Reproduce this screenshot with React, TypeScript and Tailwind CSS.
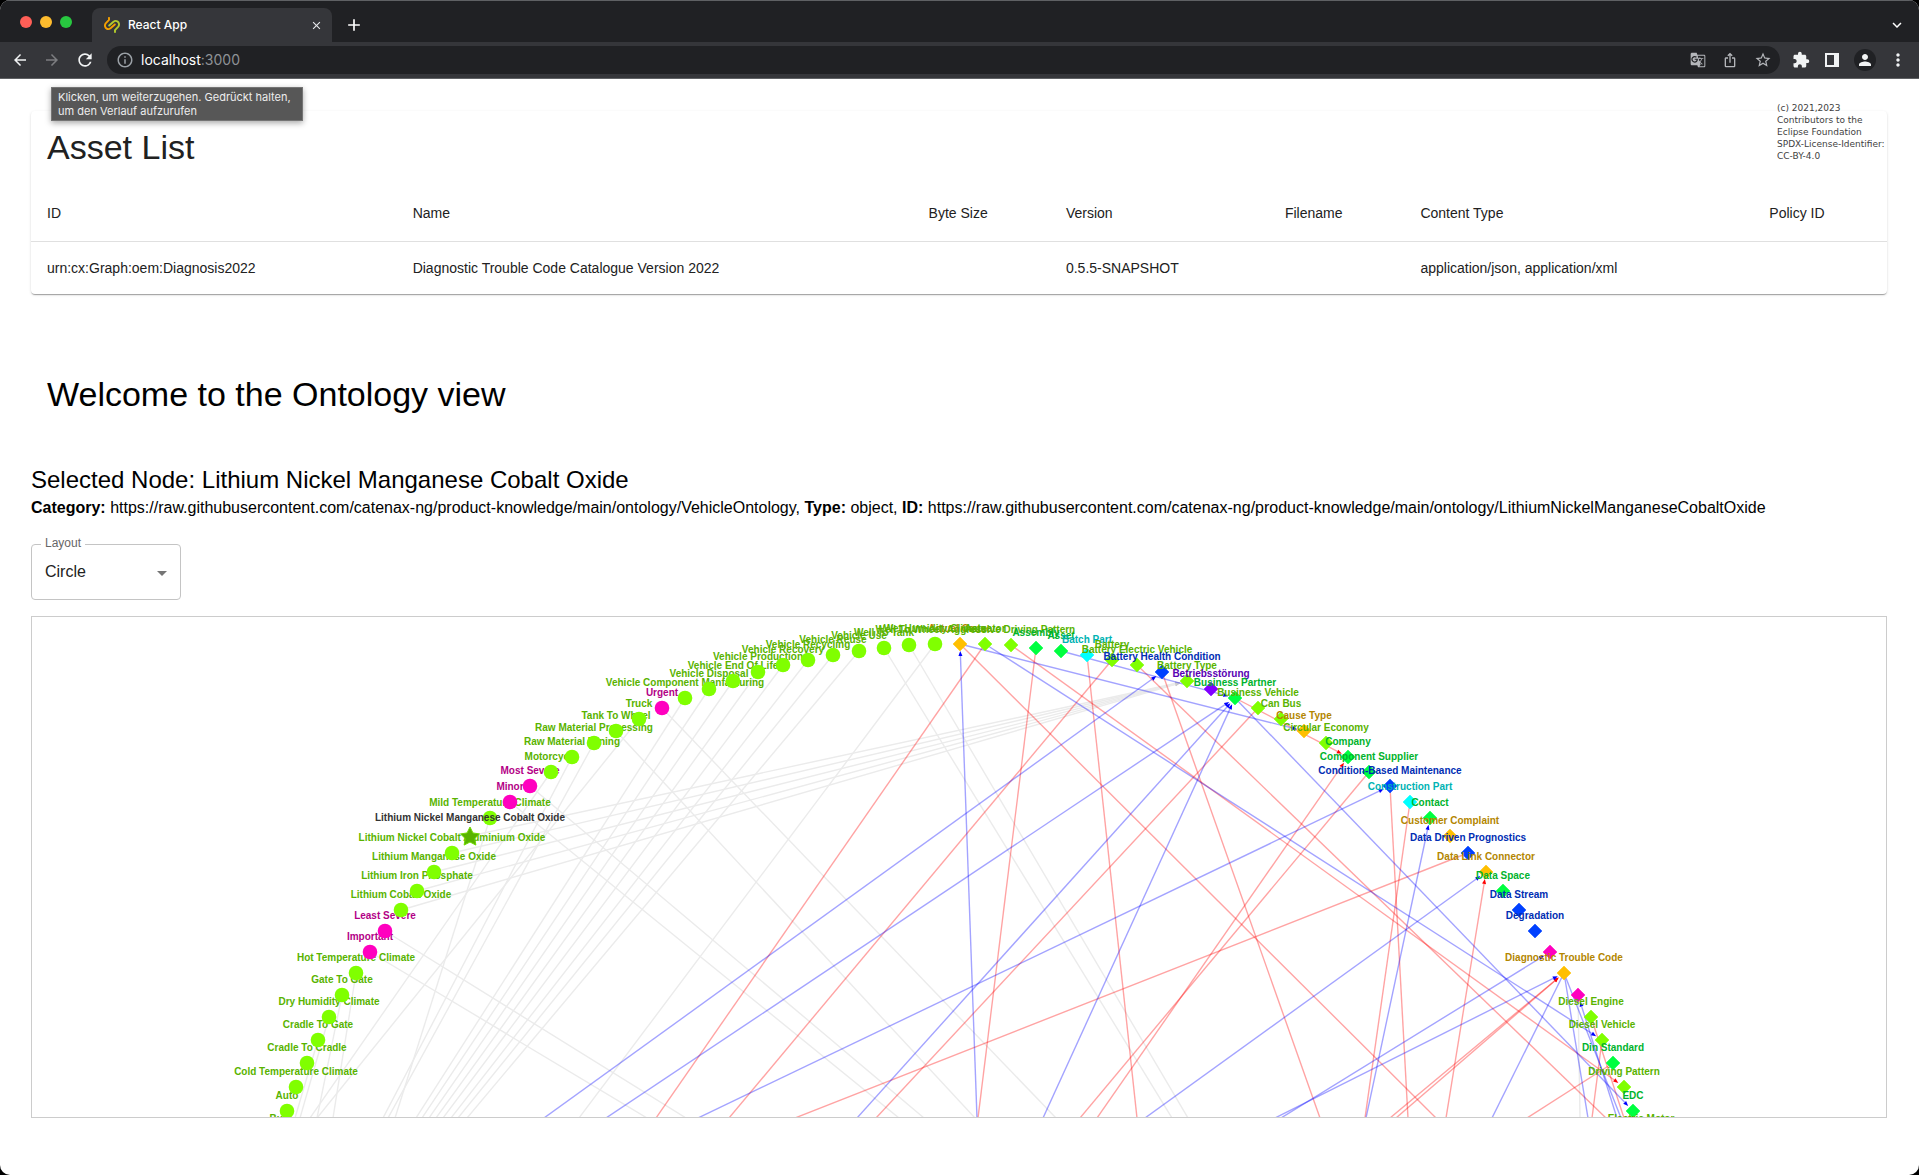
import React from "react";
import {
  MdAdd,
  MdArrowBack,
  MdArrowDropDown,
  MdArrowForward,
  MdClose,
  MdExtension,
  MdGTranslate,
  MdInfoOutline,
  MdIosShare,
  MdKeyboardArrowDown,
  MdMoreVert,
  MdPerson,
  MdRefresh,
  MdStarBorder,
} from "react-icons/md";

type Tone = "lime" | "green" | "blue" | "cyan" | "orange" | "purple" | "magenta";

const fills: Record<Tone, string> = {
  lime: "#80ff00",
  green: "#00ff40",
  blue: "#0040ff",
  cyan: "#00ffff",
  orange: "#ffbf00",
  purple: "#8000ff",
  magenta: "#ff00bf",
};

const inks: Record<Tone, string> = {
  lime: "#59b300",
  green: "#00b32d",
  blue: "#002db3",
  cyan: "#00b3b3",
  orange: "#b38600",
  purple: "#5900b3",
  magenta: "#b30086",
};

/* Offsets of each ring slot from the top of the circle; both halves share them. */
const CX = 960;
const ring: [number, number][] = [
  [0, 644], [25, 644], [51, 645], [76, 648], [101, 651], [127, 655],
  [152, 660], [177, 665], [202, 672], [227, 681], [251, 689], [275, 698],
  [298, 708], [321, 719], [344, 731], [366, 743], [388, 757], [409, 772],
  [430, 786], [450, 802], [470, 818], [490, 836], [508, 853], [526, 872],
  [543, 891], [559, 910], [575, 931], [590, 952], [604, 973], [618, 995],
  [631, 1017], [642, 1040], [653, 1063], [664, 1087], [673, 1111], [681, 1134],
];

const rightNodes: [string, Tone][] = [
  ["Actual Cause", "orange"],
  ["Actuator", "lime"],
  ["Aggressive Driving Pattern", "lime"],
  ["Assembly", "green"],
  ["Asset", "green"],
  ["Batch Part", "cyan"],
  ["Battery", "lime"],
  ["Battery Electric Vehicle", "lime"],
  ["Battery Health Condition", "blue"],
  ["Battery Type", "lime"],
  ["Betriebsstörung", "purple"],
  ["Business Partner", "green"],
  ["Business Vehicle", "lime"],
  ["Can Bus", "lime"],
  ["Cause Type", "orange"],
  ["Circular Economy", "lime"],
  ["Company", "green"],
  ["Component Supplier", "green"],
  ["Condition-Based Maintenance", "blue"],
  ["Construction Part", "cyan"],
  ["Contact", "green"],
  ["Customer Complaint", "orange"],
  ["Data Driven Prognostics", "blue"],
  ["Data Link Connector", "orange"],
  ["Data Space", "green"],
  ["Data Stream", "blue"],
  ["Degradation", "blue"],
  ["", "magenta"],
  ["Diagnostic Trouble Code", "orange"],
  ["", "magenta"],
  ["Diesel Engine", "lime"],
  ["Diesel Vehicle", "lime"],
  ["Din Standard", "green"],
  ["Driving Pattern", "lime"],
  ["EDC", "green"],
  ["Electric Motor", "lime"],
];

/* Left half, from the slot beside the top node down to the lower edge. */
const leftNodes: [string, Tone][] = [
  ["Wet Humidity Climate", "lime"],
  ["Well To Wheel", "lime"],
  ["Well To Tank", "lime"],
  ["Vehicle Use", "lime"],
  ["Vehicle Reuse", "lime"],
  ["Vehicle Recycling", "lime"],
  ["Vehicle Recovery", "lime"],
  ["Vehicle Production", "lime"],
  ["Vehicle End Of Life", "lime"],
  ["Vehicle Disposal", "lime"],
  ["Vehicle Component Manfacturing", "lime"],
  ["Urgent", "magenta"],
  ["Truck", "lime"],
  ["Tank To Wheel", "lime"],
  ["Raw Material Processing", "lime"],
  ["Raw Material Mining", "lime"],
  ["Motorcycle", "lime"],
  ["Most Severe", "magenta"],
  ["Minor", "magenta"],
  ["Mild Temperature Climate", "lime"],
  ["Lithium Nickel Manganese Cobalt Oxide", "lime"],
  ["Lithium Nickel Cobalt Aluminium Oxide", "lime"],
  ["Lithium Manganese Oxide", "lime"],
  ["Lithium Iron Phosphate", "lime"],
  ["Lithium Cobalt Oxide", "lime"],
  ["Least Severe", "magenta"],
  ["Important", "magenta"],
  ["Hot Temperature Climate", "lime"],
  ["Gate To Gate", "lime"],
  ["Dry Humidity Climate", "lime"],
  ["Cradle To Gate", "lime"],
  ["Cradle To Cradle", "lime"],
  ["Cold Temperature Climate", "lime"],
  ["Auto", "lime"],
  ["Bus", "lime"],
];

const SELECTED = 21;
const EDGE_Y = 1118;

const R = (i: number): [number, number] => [CX + ring[i][0], ring[i][1]];
const L = (i: number): [number, number] => [CX - ring[i][0], ring[i][1]];
const B = (x: number): [number, number] => [x, EDGE_Y];

type Edge = [[number, number], [number, number], boolean?];

const grayEdges: Edge[] = [
  [L(21), R(9), true], [L(22), R(9), true], [L(23), R(9), true], [L(24), R(9), true], [L(25), R(9), true],
  [L(1), B(579)], [L(2), B(1188)], [L(3), B(1172)],
  [L(4), B(467)], [L(5), B(458)], [L(6), B(451)], [L(7), B(443)], [L(8), B(436)],
  [L(9), B(429)], [L(10), B(422)], [L(11), B(416)], [L(12), B(1056)], [L(13), B(317)],
  [L(14), B(975)], [L(15), B(388)], [L(16), B(383)], [L(17), B(310)], [L(18), B(924)],
  [L(19), B(899)], [L(20), B(395)], [L(26), B(686)], [L(27), B(647)],
  [L(28), B(333)], [L(29), B(317)], [L(30), B(300)], [L(31), B(295)],
  [B(1580), R(29)],
];

const redEdges: Edge[] = [
  [R(1), B(656)], [R(6), B(729)], [R(3), B(978)], [R(5), B(1137)], [R(0), B(1436)],
  [R(2), R(33), true], [R(7), B(1606)], [R(8), B(1320)], [R(11), R(16), true],
  [R(12), B(876)], [B(1097), R(16), true], [R(17), B(1080)], [R(18), B(1408)],
  [R(19), B(1365)], [R(22), B(795)], [B(1446), R(23), true],
  [B(1390), R(28), true], [B(1396), R(28), true],
  [R(31), B(1592)], [R(30), B(1624)], [R(32), B(1527)],
];

const blueEdges: Edge[] = [
  [R(0), R(14), true], [R(4), R(11), true], [R(1), R(31), true], [R(11), R(34), true],
  [B(544), R(8), true], [B(606), R(11), true], [B(857), R(11), true], [B(1043), R(11), true],
  [B(698), R(18), true], [B(977), R(0), true], [B(1366), R(20), true], [B(1145), R(23), true],
  [B(1281), R(27), true], [B(1275), R(28), true], [R(28), B(1492)], [R(28), B(1588)],
  [R(28), B(1621)], [B(1617), R(29), true],
];

function EdgeGroup({ edges, color, line }: { edges: Edge[]; color: string; line: string }) {
  return (
    <g>
      {edges.map(([[x1, y1], [x2, y2], arrow], i) => {
        const length = Math.hypot(x2 - x1, y2 - y1);
        const ux = (x2 - x1) / length;
        const uy = (y2 - y1) / length;
        const tx = x2 - ux * 7;
        const ty = y2 - uy * 7;
        const bx = tx - ux * 5;
        const by = ty - uy * 5;
        const head = `${tx},${ty} ${bx - uy * 2},${by + ux * 2} ${bx + uy * 2},${by - ux * 2}`;
        return (
          <g key={i}>
            <line x1={x1} y1={y1} x2={arrow ? bx : x2} y2={arrow ? by : y2} stroke={line} strokeWidth="1.4" />
            {arrow && <polygon points={head} fill={color} />}
          </g>
        );
      })}
    </g>
  );
}

function NodeLabel({ x, y, text, color }: { x: number; y: number; text: string; color: string }) {
  return (
    <text x={x} y={y} textAnchor="middle" fontSize="10" fontWeight="700" fill={color}>
      {text}
    </text>
  );
}

function starPoints(x: number, y: number) {
  return Array.from({ length: 10 }, (_, i) => {
    const radius = i % 2 === 0 ? 10 : 5;
    const angle = (Math.PI / 5) * i - Math.PI / 2;
    return `${x + radius * Math.cos(angle)},${y + radius * Math.sin(angle)}`;
  }).join(" ");
}

function OntologyGraph() {
  const [sx, sy] = L(SELECTED);
  return (
    <svg
      viewBox="32 617 1854 500"
      className="block w-full font-['Liberation_Sans',Arial,sans-serif]"
      role="img"
      aria-label="Ontology graph in circle layout"
    >
      <EdgeGroup edges={grayEdges} color="#cccccc" line="#ebebeb" />
      <EdgeGroup edges={redEdges} color="#ff0000" line="rgba(255,0,0,0.36)" />
      <EdgeGroup edges={blueEdges} color="#0000ff" line="rgba(0,0,255,0.36)" />
      {rightNodes.map(([text, tone], i) => {
        const [x, y] = R(i);
        return (
          <g key={i}>
            <polygon
              points={`${x},${y - 7} ${x + 7},${y} ${x},${y + 7} ${x - 7},${y}`}
              fill={fills[tone]}
              stroke={fills[tone]}
              strokeWidth="0.5"
            />
            {text && <NodeLabel x={x} y={y - 12} text={text} color={inks[tone]} />}
          </g>
        );
      })}
      {leftNodes
        .map(([text, tone], i) => ({ text, tone, slot: i + 1 }))
        .reverse()
        .map(({ text, tone, slot }) => {
          const [x, y] = L(slot);
          if (slot === SELECTED) {
            return (
              <polygon
                key={slot}
                points={starPoints(x, y + 1)}
                fill="#59b300"
                stroke="#6fd900"
                strokeWidth="1"
              />
            );
          }
          return (
            <g key={slot}>
              <circle cx={x} cy={y} r="7.3" fill={fills[tone]} />
              <NodeLabel x={x} y={y - 12} text={text} color={inks[tone]} />
            </g>
          );
        })}
      <NodeLabel x={sx} y={sy - 15} text={leftNodes[SELECTED - 1][0]} color="#333333" />
    </svg>
  );
}

function Favicon() {
  return (
    <svg viewBox="0 0 16 16" className="size-4" fill="none" strokeLinecap="round" strokeLinejoin="round" strokeWidth="1.9">
      <path d="M5 .9v2L1.7 6.3c-1.3 1.7-.8 4.3.9 5.3 1.6 1 3 .4 4.2-.6l4-3.5" stroke="#f5a000" />
      <path d="M11 15.1v-2l3.3-3.4c1.3-1.7.8-4.3-.9-5.3-1.6-1-3-.4-4.2.6l-4 3.5" stroke="#b3cb2d" />
    </svg>
  );
}

function BrowserChrome() {
  return (
    <header className="font-['Inter',sans-serif]">
      <div className="flex h-[42px] items-end border-t border-[#5f6164] bg-[#202124] pr-[15px]">
        <div className="flex h-full w-[92px] items-center gap-2 pl-5">
          <button aria-label="Close window" className="size-3 rounded-full bg-[#ff5f57]" />
          <button aria-label="Minimise window" className="size-3 rounded-full bg-[#febc2e]" />
          <button aria-label="Zoom window" className="size-3 rounded-full bg-[#28c840]" />
        </div>
        <div className="flex h-[34px] w-[240px] items-center rounded-t-lg bg-[#35363a] pr-2 pl-3">
          <Favicon />
          <span className="ml-2 flex-1 text-xs font-medium text-white">React App</span>
          <button aria-label="Close tab" className="grid size-4 place-items-center text-[#e8eaed]">
            <MdClose size={13} />
          </button>
        </div>
        <button aria-label="New tab" className="ml-3 grid h-[34px] w-5 place-items-center text-white">
          <MdAdd size={20} />
        </button>
        <button aria-label="Search tabs" className="ml-auto grid h-[34px] w-4 place-items-center text-white">
          <MdKeyboardArrowDown size={18} className="shrink-0" />
        </button>
      </div>
      <div className="flex h-[37px] items-center border-b border-[#5f6164] bg-[#35363a] px-[11px] text-[#f1f3f4]">
        <button aria-label="Back" className="w-8">
          <MdArrowBack size={18} />
        </button>
        <button aria-label="Forward" className="w-8 text-[#7d7e81]">
          <MdArrowForward size={18} />
        </button>
        <button aria-label="Reload" className="w-8">
          <MdRefresh size={20} />
        </button>
        <div className="flex h-7 flex-1 items-center rounded-full bg-[#202124] px-2 text-[#b4b6ba]">
          <button aria-label="Site information" className="w-[26px] pl-px text-[#9aa0a6]">
            <MdInfoOutline size={18} />
          </button>
          <div className="flex-1 text-sm text-[#8f9296]">
            <span className="text-white">localhost</span>:3000
          </div>
          <div className="flex gap-4">
            <button aria-label="Translate"><MdGTranslate size={16} /></button>
            <button aria-label="Share"><MdIosShare size={16} /></button>
            <button aria-label="Bookmark"><MdStarBorder size={18} /></button>
          </div>
        </div>
        <div className="ml-3 flex items-center gap-3">
          <button aria-label="Extensions"><MdExtension size={18} /></button>
          <button aria-label="Side panel" className="grid size-5 place-items-center">
            <span className="block size-[14px] border-2 border-r-[5px] border-[#f1f3f4]" />
          </button>
          <button aria-label="Profile" className="grid size-[22px] place-items-center rounded-full bg-[#202124]">
            <MdPerson size={18} />
          </button>
          <button aria-label="Menu"><MdMoreVert size={20} /></button>
        </div>
      </div>
    </header>
  );
}

const columns = ["ID", "Name", "Byte Size", "Version", "Filename", "Content Type", "Policy ID"];
const asset = [
  "urn:cx:Graph:oem:Diagnosis2022",
  "Diagnostic Trouble Code Catalogue Version 2022",
  "",
  "0.5.5-SNAPSHOT",
  "",
  "application/json, application/xml",
  "",
];

function AssetList() {
  return (
    <section className="relative rounded bg-white text-[#212121] shadow-[0_2px_1px_-1px_rgba(0,0,0,0.2),0_1px_1px_rgba(0,0,0,0.14),0_1px_3px_rgba(0,0,0,0.12)]">
      <h1 className="px-4 pt-4 pb-3 text-[34px] leading-10">Asset List</h1>
      <p className="absolute -top-[9px] right-0 w-[110px] overflow-hidden font-['DejaVu_Sans',sans-serif] text-[9px] leading-3 text-[#3f3f3f]">
        (c) 2021,2023
        <br />
        Contributors to the
        <br />
        Eclipse Foundation
        <br />
        SPDX-License-Identifier:
        <br />
        CC-BY-4.0
      </p>
      <table className="mt-1.5 w-full table-fixed text-left text-sm">
        <colgroup>
          <col className="w-[19.7%]" />
          <col className="w-[27.8%]" />
          <col className="w-[7.4%]" />
          <col className="w-[11.8%]" />
          <col className="w-[7.3%]" />
          <col className="w-[18.8%]" />
          <col className="w-[7.2%]" />
        </colgroup>
        <thead>
          <tr className="h-14 border-b border-[#e0e0e0]">
            {columns.map((name) => (
              <th key={name} scope="col" className="px-4 font-normal whitespace-nowrap">
                {name}
              </th>
            ))}
          </tr>
        </thead>
        <tbody>
          <tr className="h-[53px]">
            {asset.map((value, i) => (
              <td key={i} className="px-4 whitespace-nowrap">
                {value}
              </td>
            ))}
          </tr>
        </tbody>
      </table>
    </section>
  );
}

export default function App() {
  return (
    <div className="min-h-screen bg-black">
      <div className="relative flex min-h-screen flex-col overflow-hidden rounded-[10px] bg-white font-['Liberation_Sans',Arial,sans-serif] text-black">
        <BrowserChrome />
        <div
          role="tooltip"
          className="absolute top-[87px] left-[51px] z-10 w-[252px] border border-[#747474] bg-[#575757] px-1.5 py-0.5 font-['Inter',sans-serif] text-[11px] leading-[14px] whitespace-nowrap text-[#ededed] shadow-[0_2px_6px_rgba(0,0,0,0.35)]"
        >
          Klicken, um weiterzugehen. Gedrückt halten,
          <br />
          um den Verlauf aufzurufen
        </div>
        <main className="pt-8 pr-8 pb-14 pl-[31px]">
          <AssetList />
          <h2 className="mt-20 px-4 text-[34px] leading-10">Welcome to the Ontology view</h2>
          <h3 className="mt-[50px] text-2xl">Selected Node: Lithium Nickel Manganese Cobalt Oxide</h3>
          <p className="text-base whitespace-nowrap">
            <b>Category:</b> https://raw.githubusercontent.com/catenax-ng/product-knowledge/main/ontology/VehicleOntology,{" "}
            <b>Type:</b> object, <b>ID:</b>{" "}
            https://raw.githubusercontent.com/catenax-ng/product-knowledge/main/ontology/LithiumNickelManganeseCobaltOxide
          </p>
          <div className="relative mt-6 h-14 w-[150px] rounded border border-[#c4c4c4]">
            <label htmlFor="layout" className="absolute -top-2.5 left-[9px] bg-white px-1 text-xs leading-4 text-[#666666]">
              Layout
            </label>
            <select id="layout" className="h-full w-full appearance-none bg-transparent px-[13px] text-base text-[#212121]">
              <option>Circle</option>
            </select>
            <MdArrowDropDown size={24} className="pointer-events-none absolute top-4 right-1.5 text-[#757575]" />
          </div>
          <div className="mt-4 overflow-hidden border border-[#cccccc]">
            <OntologyGraph />
          </div>
        </main>
      </div>
    </div>
  );
}
